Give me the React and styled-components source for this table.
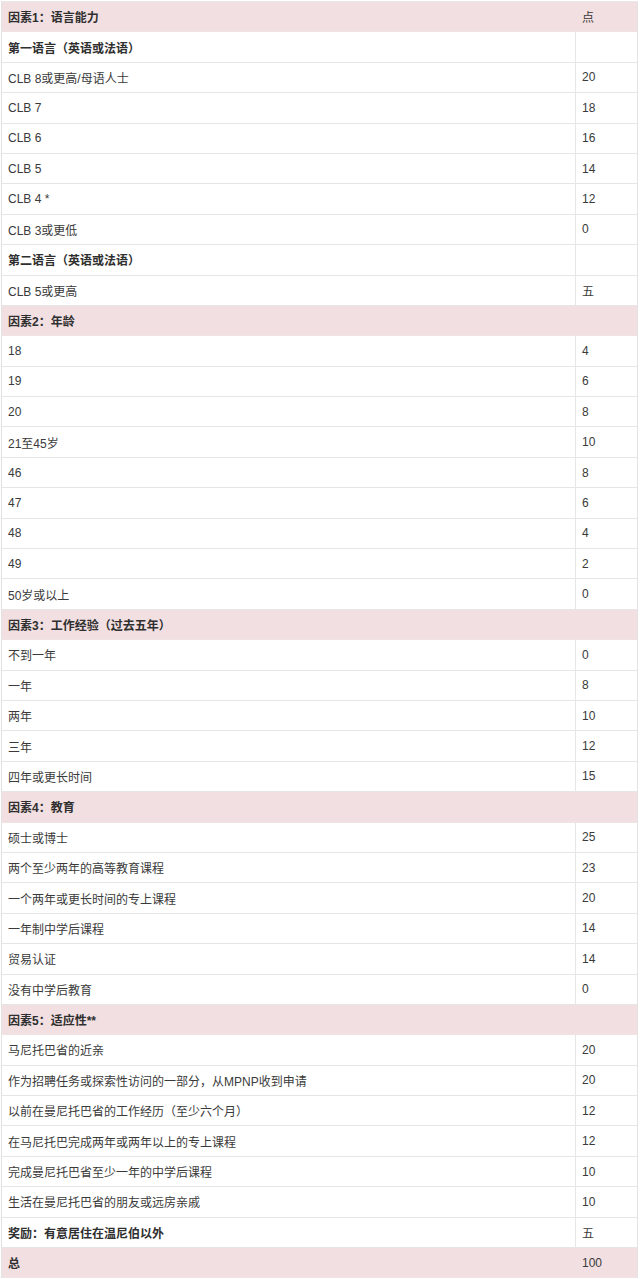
import React from "react";
import styled, { createGlobalStyle } from "styled-components";

const Global = createGlobalStyle`
  html, body { margin: 0; padding: 0; background: #ffffff; }
  body {
    font-family: "Liberation Sans", "Noto Sans CJK SC", Arial, sans-serif;
    color: #333333;
  }
`;

const Table = styled.div`
  margin: 1px 2px 0 1px;
  border-left: 1px solid #e2e2e2;
  border-right: 1px solid #e2e2e2;
  border-top: 1px solid #e8e8e8;
  display: flex;
  flex-direction: column;
`;

const Row = styled.div`
  display: grid;
  grid-template-columns: 573px 1fr;
  height: 30.4px;
  box-sizing: border-box;
  border-bottom: 1px solid ${(p) => (p.$pink ? "#efe3e4" : "#e6e6e6")};
  background: ${(p) => (p.$pink ? "#f2dfe1" : "#ffffff")};
  font-size: 12px;
`;

const Cell = styled.div`
  display: flex;
  align-items: center;
  padding-left: 6px;
  white-space: nowrap;
  font-weight: ${(p) => (p.$bold ? 700 : 400)};
  color: ${(p) => (p.$bold ? "#2f2f2f" : "#3a3a3a")};
`;

const Points = styled(Cell)`
  border-left: 1px solid ${(p) => (p.$pink ? "transparent" : "#e6e6e6")};
  font-weight: 400;
`;

const rows = [
  { l: "因素1：语言能力", r: "点", pink: true, bold: true },
  { l: "第一语言（英语或法语）", r: "", bold: true },
  { l: "CLB 8或更高/母语人士", r: "20" },
  { l: "CLB 7", r: "18" },
  { l: "CLB 6", r: "16" },
  { l: "CLB 5", r: "14" },
  { l: "CLB 4 *", r: "12" },
  { l: "CLB 3或更低", r: "0" },
  { l: "第二语言（英语或法语）", r: "", bold: true },
  { l: "CLB 5或更高", r: "五" },
  { l: "因素2：年龄", r: "", pink: true, bold: true },
  { l: "18", r: "4" },
  { l: "19", r: "6" },
  { l: "20", r: "8" },
  { l: "21至45岁", r: "10" },
  { l: "46", r: "8" },
  { l: "47", r: "6" },
  { l: "48", r: "4" },
  { l: "49", r: "2" },
  { l: "50岁或以上", r: "0" },
  { l: "因素3：工作经验（过去五年）", r: "", pink: true, bold: true },
  { l: "不到一年", r: "0" },
  { l: "一年", r: "8" },
  { l: "两年", r: "10" },
  { l: "三年", r: "12" },
  { l: "四年或更长时间", r: "15" },
  { l: "因素4：教育", r: "", pink: true, bold: true },
  { l: "硕士或博士", r: "25" },
  { l: "两个至少两年的高等教育课程", r: "23" },
  { l: "一个两年或更长时间的专上课程", r: "20" },
  { l: "一年制中学后课程", r: "14" },
  { l: "贸易认证", r: "14" },
  { l: "没有中学后教育", r: "0" },
  { l: "因素5：适应性**", r: "", pink: true, bold: true },
  { l: "马尼托巴省的近亲", r: "20" },
  { l: "作为招聘任务或探索性访问的一部分，从MPNP收到申请", r: "20" },
  { l: "以前在曼尼托巴省的工作经历（至少六个月）", r: "12" },
  { l: "在马尼托巴完成两年或两年以上的专上课程", r: "12" },
  { l: "完成曼尼托巴省至少一年的中学后课程", r: "10" },
  { l: "生活在曼尼托巴省的朋友或远房亲戚", r: "10" },
  { l: "奖励：有意居住在温尼伯以外", r: "五", bold: true },
  { l: "总", r: "100", pink: true, bold: true },
];

export default function App() {
  return (
    <>
      <Global />
      <Table>
        {rows.map((row, i) => (
          <Row key={i} $pink={row.pink}>
            <Cell $bold={row.bold}>{row.l}</Cell>
            <Points $pink={row.pink}>{row.r}</Points>
          </Row>
        ))}
      </Table>
    </>
  );
}
